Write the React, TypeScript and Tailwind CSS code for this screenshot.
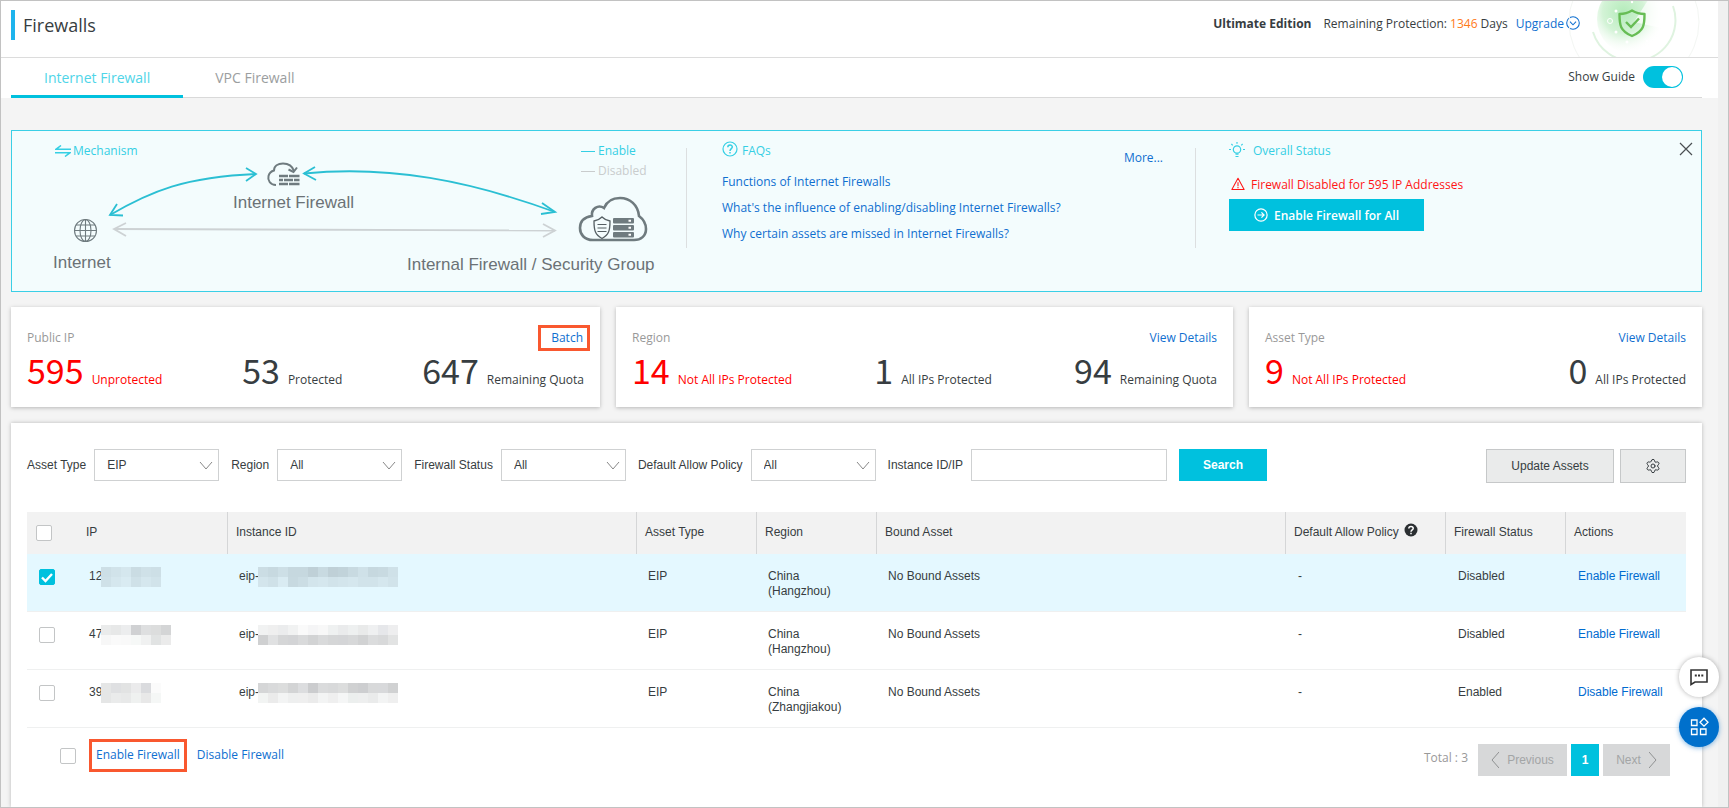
import React, { useState } from 'react';
import { Settings } from 'lucide-react';

type Stat = { value: string; label: string; alert?: boolean };

type AssetRow = {
  ip: string;
  ipMask: string[][];
  instance: string;
  instanceMask: string[][];
  region: string;
  status: string;
  action: string;
};

const uiFont = 'font-["Open_Sans",sans-serif]';

const faqs = [
  'Functions of Internet Firewalls',
  "What's the influence of enabling/disabling Internet Firewalls?",
  'Why certain assets are missed in Internet Firewalls?',
];

const cards: { title: string; link: string; marked?: boolean; stats: Stat[] }[] = [
  {
    title: 'Public IP',
    link: 'Batch',
    marked: true,
    stats: [
      { value: '595', label: 'Unprotected', alert: true },
      { value: '53', label: 'Protected' },
      { value: '647', label: 'Remaining Quota' },
    ],
  },
  {
    title: 'Region',
    link: 'View Details',
    stats: [
      { value: '14', label: 'Not All IPs Protected', alert: true },
      { value: '1', label: 'All IPs Protected' },
      { value: '94', label: 'Remaining Quota' },
    ],
  },
  {
    title: 'Asset Type',
    link: 'View Details',
    stats: [
      { value: '9', label: 'Not All IPs Protected', alert: true },
      { value: '0', label: 'All IPs Protected' },
    ],
  },
];

const filters = [
  { id: 'asset-type', label: 'Asset Type', value: 'EIP' },
  { id: 'region', label: 'Region', value: 'All' },
  { id: 'status', label: 'Firewall Status', value: 'All' },
  { id: 'policy', label: 'Default Allow Policy', value: 'All' },
];

const rows: AssetRow[] = [
  {
    ip: '12',
    ipMask: [
      ['#cddfe6', '#d1e3ea', '#d5e7ee', '#cadce3', '#cfe1e8', '#cddfe6'],
      ['#cfe1e8', '#d5e7ee', '#d9ebf2', '#cfe1e8', '#d5e7ee', '#d1e3ea'],
    ],
    instance: 'eip-',
    instanceMask: [
      ['#cbdde4', '#c7d9e0', '#cddfe6', '#c6d8df', '#c6d8df', '#bfd0d7', '#c8dae1', '#bfd0d7', '#c1d3da', '#c8dae1', '#cfe1e8', '#c6d8df', '#c8dae1', '#cfe1e8'],
      ['#d3e5ec', '#cfe1e8', '#d9ebf2', '#c7d9e0', '#cbdde4', '#d3e5ec', '#d5e7ee', '#d1e3ea', '#d3e5ec', '#d5e7ee', '#d1e3ea', '#d1e3ea', '#d5e7ee', '#d1e3ea'],
    ],
    region: '(Hangzhou)',
    status: 'Disabled',
    action: 'Enable Firewall',
  },
  {
    ip: '47',
    ipMask: [
      ['#eaebeb', '#e7e8e8', '#ecedee', '#d0d1d3', '#dedfe0', '#dcdddd', '#d4d5d6'],
      ['#f7f7f7', '#fafafa', '#f9f9f9', '#f6f8f7', '#f0f1f1', '#e1e3e3', '#ebebeb'],
    ],
    instance: 'eip-',
    instanceMask: [
      ['#f1f2f2', '#efefef', '#ebeced', '#f1f2f2', '#fafafa', '#f5f5f6', '#f8f8f8', '#eff1f1', '#eaebec', '#eef0f0', '#e9eaea', '#eff0f1', '#e6e7ea', '#eeeeef'],
      ['#cfd0d1', '#e0e1e2', '#d5d6d7', '#d3d4d6', '#d9dadb', '#d2d3d4', '#d9dadb', '#d5d6d7', '#d4d5d7', '#d7d8d9', '#d1d2d3', '#dbdcdd', '#d8d9da', '#e2e3e3'],
    ],
    region: '(Hangzhou)',
    status: 'Disabled',
    action: 'Enable Firewall',
  },
  {
    ip: '39',
    ipMask: [
      ['#e5e6e6', '#dfe0e2', '#e2e3e3', '#ebebec', '#dadbde', '#fbfbfb'],
      ['#e5e6e6', '#eaebeb', '#e8e9e9', '#eff1f0', '#e8e8e8', '#f5f7f6'],
    ],
    instance: 'eip-',
    instanceMask: [
      ['#d5d6d7', '#d9dadb', '#dcdddd', '#d3d4d5', '#dcdddf', '#cbccce', '#dadbdc', '#d8d9da', '#dcdddd', '#d0d1d2', '#cdced0', '#d8d9da', '#d8d9db', '#d0d1d2'],
      ['#f2f4f3', '#ebebeb', '#f3f4f4', '#eeefef', '#efefef', '#ebebeb', '#f3f4f4', '#efefef', '#f5f6f6', '#ecefee', '#eeefef', '#eaebeb', '#f3f4f4', '#efefef'],
    ],
    region: '(Zhangjiakou)',
    status: 'Enabled',
    action: 'Disable Firewall',
  },
];

const Mosaic: React.FC<{ cells: string[][] }> = ({ cells }) => (
  <span className="-ml-px flex flex-col">
    {cells.map((line, i) => (
      <span key={i} className="flex">
        {line.map((color, j) => (
          <span key={j} className="h-[10px] w-[10px]" style={{ backgroundColor: color }} />
        ))}
      </span>
    ))}
  </span>
);

const CheckBox: React.FC<{ label: string; defaultChecked?: boolean }> = ({ label, defaultChecked }) => (
  <span className="relative block h-4 w-4">
    <input
      type="checkbox"
      aria-label={label}
      defaultChecked={defaultChecked}
      className="peer block h-4 w-4 appearance-none rounded-xs border border-[#c3c5c6] bg-white checked:border-[#00c1de] checked:bg-[#00c1de]"
    />
    <svg viewBox="0 0 16 16" className="pointer-events-none absolute inset-0 hidden h-4 w-4 peer-checked:block">
      <path d="M3 8.5 6.5 12 13 5" fill="none" stroke="#fff" strokeWidth="2.4" />
    </svg>
  </span>
);

const HeaderShield: React.FC = () => (
  <svg viewBox="0 0 136 56" className="pointer-events-none absolute top-0 right-4 h-14 w-[136px]" aria-hidden="true">
    <defs>
      <radialGradient id="glow" cx="0.38" cy="0.4" r="0.6">
        <stop offset="0" stopColor="#b4ebba" />
        <stop offset="0.5" stopColor="#d3f3d6" />
        <stop offset="1" stopColor="#ffffff" stopOpacity="0" />
      </radialGradient>
    </defs>
    <circle cx="68" cy="21" r="65" fill="none" stroke="#f3f6f3" />
    <circle cx="66" cy="18" r="35" fill="url(#glow)" />
    <path d="M68 21 84 -4 110 0 108 30Z" fill="#ffffff" opacity="0.7" />
    <path d="M27 31A41 41 0 0 0 68 60A41 41 0 0 0 107 5" fill="none" stroke="#dff3e0" strokeWidth="2" />
    <g fill="#fff">
      <circle cx="50" cy="10" r="1.5" />
      <circle cx="50" cy="31" r="1.5" />
      <circle cx="61" cy="41" r="1.5" />
      <circle cx="66" cy="1" r="1.2" />
      <circle cx="81" cy="40" r="1.2" />
    </g>
    <circle cx="44" cy="20" r="2.5" fill="none" stroke="#fff" />
    <path d="M66 9.5C70 12 74 13 78.500 13C78.500 24 78 30 66 35C54 30 53.500 24 53.500 13C58 13 62 12 66 9.500Z" fill="none" stroke="#67bd55" strokeWidth="2.4" strokeLinejoin="round" />
    <path d="M60 21 65 26 73 17.500" fill="none" stroke="#67bd55" strokeWidth="2.4" />
  </svg>
);

const MechanismDiagram: React.FC = () => (
  <svg viewBox="40 131 640 160" className="h-40 w-[640px]" role="img" aria-label="Traffic between Internet and assets">
    <g fill="none" stroke="#2bbfd3" strokeWidth="1.800">
      <path d="M110 215C151 191 185 177 256 174" />
      <path d="M246 168 256 174 246 181M117 204 110 215 123 215.500" />
      <path d="M304 173.500C390 165 470 181 555 212" />
      <path d="M315 167 304 173.500 316 180M542 203 555 212 541 214" />
    </g>
    <g fill="none" stroke="#cdd2d4" strokeWidth="1.800">
      <path d="M114 229 555 230.500" />
      <path d="M126 223 114 229 126 236M543 224 555 230.500 543 237" />
    </g>
    {/* globe */}
    <g fill="none" stroke="#6f7b7f" strokeWidth="1.100">
      <circle cx="85.500" cy="230.500" r="11" />
      <ellipse cx="85.500" cy="230.500" rx="5.500" ry="11" />
      <path d="M85.500 219.500V241.500M74.500 230.500H96.500M76 225H95M76 236H95" />
    </g>
    {/* cloud in front of a brick wall */}
    <g fill="none" stroke="#6f7b7f" strokeWidth="2">
      <path d="M276 185C270 185 267.500 180 268.500 176C269.500 172 272 171 274 170.500C274 166 278 163.500 283 163.500C288.500 163.500 292.500 166.500 294 171" />
      <path d="M288.500 169.500 293.500 172 297 167.500" />
    </g>
    <g stroke="#6f7b7f" strokeWidth="2.400">
      <path d="M279 176H288M289 176H299.500M279 180H283M284 180H293M294 180H299.500M279 184H288M289 184H299.500" />
    </g>
    {/* cloud with shield and servers */}
    <path
      d="M593 240C584 240 580 234 580 228C580 221 585 217 592 216C591 209 598 204 604 208C607 201 613 198 620 198C630 198 638 205 639 216C643 219 646 223 646 229C646 236 641 240 634 240Z"
      fill="none"
      stroke="#6f7b7f"
      strokeWidth="2.600"
    />
    <path d="M602 217C605 220 607 220.500 610 221C610 230 609 235 602 238.500C595 235 594 230 594 221C597 220.500 599 220 602 217Z" fill="none" stroke="#555f63" strokeWidth="1.300" />
    <path d="M597.500 224.500H606.500M597.500 228H606.500M597.500 231.500H606.500" stroke="#555f63" strokeWidth="1.200" />
    <g fill="#6f7b7f">
      <rect x="613" y="218" width="21" height="5.500" rx="1" />
      <rect x="613" y="225" width="21" height="5.500" rx="1" />
      <rect x="613" y="232" width="21" height="5.500" rx="1" />
    </g>
    <path d="M628.500 220.800H631M628.500 227.800H631M628.500 234.800H631" stroke="#fff" strokeWidth="2" />
    <g fill="#6b7276" fontFamily="Liberation Sans, sans-serif" fontSize="17">
      <text x="53" y="268">Internet</text>
      <text x="233" y="208">Internet Firewall</text>
      <text x="407" y="270">Internal Firewall / Security Group</text>
    </g>
  </svg>
);

const GuidePanel: React.FC<{ onClose: () => void }> = ({ onClose }) => (
  <section className={`${uiFont} relative flex h-[162px] border border-[#3acfe6] bg-[#f3fcfd] leading-5`}>
    <div className="relative w-[674px] shrink-0 pl-7">
      <MechanismDiagram />
      <h2 className="absolute top-2.5 left-[43px] flex items-center gap-0.5 text-[#35cfe4]">
        <svg viewBox="0 0 16 12" className="h-3 w-4" fill="none" stroke="currentColor" strokeWidth="1.500">
          <path d="M16 4.300H1L6 .5M0 7.700H15L10 11.500" />
        </svg>
        Mechanism
      </h2>
      <ul className="absolute top-2.5 left-[569px]">
        <li className="flex items-center gap-[3px] text-[#35cfe4]">
          <span className="h-px w-3.5 bg-current" />
          Enable
        </li>
        <li className="flex items-center gap-[3px] text-[#c9cccd]">
          <span className="h-px w-3.5 bg-current" />
          Disabled
        </li>
      </ul>
    </div>

    <div className="my-[17px] flex h-[100px] w-[510px] shrink-0 border-x border-[#dcdfe0] pr-8 pl-[35px]">
      <div className="-mt-[7px] flex-1">
        <h2 className="flex items-center gap-1 text-[#35cfe4]">
          <svg viewBox="0 0 16 16" className="mb-1 h-4 w-4" fill="none" stroke="currentColor" strokeWidth="1.200">
            <circle cx="8" cy="8" r="7" />
            <path d="M5.800 6.300C5.800 3.200 10.300 3.300 10.300 6C10.300 7.600 8 7.800 8 10M8 11V12.500" strokeWidth="1.500" />
          </svg>
          FAQs
        </h2>
        <ul className="mt-[11px] space-y-1.5">
          {faqs.map((faq) => (
            <li key={faq} className="whitespace-nowrap">
              <a href="#faq" className="text-[#0f6fd0]">{faq}</a>
            </li>
          ))}
        </ul>
      </div>
      <a href="#more" className="text-[#0f6fd0]">More...</a>
    </div>

    <div className="flex-1 pt-2.5 pl-[33px]">
      <h2 className="flex items-center gap-2 text-[#35cfe4]">
        <svg viewBox="0 0 16 16" className="mb-0.5 h-4 w-4" fill="none" stroke="currentColor" strokeWidth="1.200">
          <circle cx="8" cy="7.500" r="3.700" />
          <path d="M6.500 12.200H9.500M6.500 14.500H9.500M8 0V1.800M0 7.500H2M14 7.500H16M2.400 2 3.700 3.300M13.600 2 12.300 3.300" />
        </svg>
        Overall Status
      </h2>
      <p className="mt-3.5 flex items-center gap-1.5 text-[#ff1515]">
        <svg viewBox="0 0 16 16" className="mb-0.5 ml-0.5 h-3.5 w-3.5" fill="none" stroke="currentColor" strokeWidth="1.200">
          <path d="M8 1.500 15 14.200H1ZM8 6V10.500M8 11.500V12.800" strokeLinejoin="round" />
        </svg>
        Firewall Disabled for 595 IP Addresses
      </p>
      <button type="button" className="mt-1 flex h-8 w-[195px] items-center justify-center gap-1.5 bg-[#00c1de] pt-0.5 font-semibold text-white">
        <svg viewBox="0 0 16 16" className="mb-0.5 h-3.5 w-3.5" fill="none" stroke="currentColor" strokeWidth="1.400">
          <circle cx="8" cy="8" r="7" />
          <path d="M4 8H11.500M8.500 5 11.500 8 8.500 11" />
        </svg>
        Enable Firewall for All
      </button>
    </div>

    <button type="button" aria-label="Close" onClick={onClose} className="absolute top-[11px] right-2 h-3.5 w-3.5">
      <svg viewBox="0 0 14 14" className="h-3.5 w-3.5" stroke="#4a4f52" strokeWidth="1.200">
        <path d="M1 1 13 13M13 1 1 13" />
      </svg>
    </button>
  </section>
);

const App: React.FC = () => {
  const [showGuide, setShowGuide] = useState(true);

  return (
    <div className="flex h-screen overflow-hidden border border-[#c2c2c2] bg-[#f4f4f4] font-['Liberation_Sans',sans-serif] text-xs text-[#373d41]">
      <main className="flex min-w-0 flex-1 flex-col">
        {/* Header */}
        <header className={`${uiFont} relative flex h-[57px] shrink-0 items-start border-b border-[#dcdcdc] bg-white pl-2.5`}>
          <h1 className="mt-[9px] border-l-4 border-[#1eb4ed] pl-2 text-lg leading-[30px]">Firewalls</h1>
          <p className="mt-[13px] mr-[138px] ml-auto flex items-center leading-5">
            <b className="mr-3">Ultimate Edition</b>
            <span>
              Remaining Protection: <span className="text-[#ff7a1a]">1346</span> Days
            </span>
            <a href="#upgrade" className="ml-2 flex items-center gap-0.5 text-[#0f6fd0]">
              Upgrade
              <svg viewBox="0 0 16 16" className="mb-0.5 h-3.5 w-3.5" fill="none" stroke="currentColor" strokeWidth="1.200">
                <circle cx="8" cy="8" r="7.200" />
                <path d="M4.500 6.500 8 10 11.500 6.500" />
              </svg>
            </a>
          </p>
          <HeaderShield />
        </header>

        {/* Tabs */}
        <div className={`${uiFont} shrink-0 bg-white pr-4 pl-2.5`}>
          <div className="flex h-10 items-stretch border-b border-[#d9d9d9]">
            <nav className="flex text-sm leading-10">
              <a href="#internet" className="-mb-px border-b-3 border-[#00c1de] px-[33px] text-[#4fd5e8]">Internet Firewall</a>
              <a href="#vpc" className="px-8 text-[#9b9ea0]">VPC Firewall</a>
            </nav>
            <label className="mr-[19px] ml-auto flex items-center gap-2 pb-px">
              Show Guide
              <input type="checkbox" className="peer sr-only" checked={showGuide} onChange={(e) => setShowGuide(e.target.checked)} />
              <span className="flex h-[22px] w-10 rounded-full bg-[#c3c5c6] p-px peer-checked:justify-end peer-checked:bg-[#00c1de]">
                <span className="h-5 w-5 rounded-full bg-white" />
              </span>
            </label>
          </div>
        </div>

        <div className="flex flex-1 flex-col pt-8 pr-4 pl-2.5">
          {showGuide && <GuidePanel onClose={() => setShowGuide(false)} />}

          {/* Summary cards */}
          <div className={`${uiFont} mt-[15px] grid grid-cols-[589fr_617fr_453fr] gap-4 leading-5`}>
            {cards.map((card) => (
              <section key={card.title} className="h-[100px] bg-white px-4 pt-[21px] shadow-[0_1px_4px_rgba(0,0,0,0.25)]">
                <div className="flex h-5 items-center justify-between">
                  <h2 className="text-[#999]">{card.title}</h2>
                  {card.marked ? (
                    <a href="#batch" className="-mr-1.5 border-3 border-[#f9582f] pr-1 pl-2.5 text-[#0f6fd0]">{card.link}</a>
                  ) : (
                    <a href="#details" className="text-[#0f6fd0]">{card.link}</a>
                  )}
                </div>
                <div className="flex items-baseline justify-between">
                  {card.stats.map((stat) => (
                    <p key={stat.label} className={stat.alert ? 'text-[#ff0000]' : ''}>
                      <span className="mr-2 font-['Noto_Sans_CJK_SC',sans-serif] text-[34px] leading-[44px]">{stat.value}</span>
                      {stat.label}
                    </p>
                  ))}
                </div>
              </section>
            ))}
          </div>

          <section className="mt-4 flex-1 bg-white px-4 pt-[26px] shadow-[0_0_4px_rgba(0,0,0,0.25)]">
            {/* Filters */}
            <form className="flex items-start" onSubmit={(e) => e.preventDefault()}>
              {filters.map((filter) => (
                <div key={filter.id} className="mr-3 flex items-center gap-2">
                  <label htmlFor={filter.id} className="whitespace-nowrap">{filter.label}</label>
                  <div className="relative">
                    <select id={filter.id} className="h-8 w-[125px] appearance-none border border-[#cfd1d2] bg-white pl-3">
                      <option>{filter.value}</option>
                    </select>
                    <svg viewBox="0 0 14 10" className="pointer-events-none absolute top-3 right-1.5 h-2.5 w-3.5" fill="none" stroke="#888">
                      <path d="M1 1 7 8 13 1" />
                    </svg>
                  </div>
                </div>
              ))}
              <label htmlFor="instance" className="mr-2 leading-8">Instance ID/IP</label>
              <input id="instance" type="text" className="h-8 w-[196px] border border-[#cfd1d2] bg-white px-2" />
              <button type="submit" className="ml-3 h-8 w-[88px] bg-[#00c1de] font-bold text-white">Search</button>
              <button type="button" className="ml-auto h-[34px] w-32 border border-[#c6c8c9] bg-[#eaebeb]">Update Assets</button>
              <button type="button" aria-label="Settings" className="ml-1.5 flex h-[34px] w-[66px] items-center justify-center border border-[#c6c8c9] bg-[#eaebeb]">
                <Settings size={16} strokeWidth={1.5} />
              </button>
            </form>

            {/* Asset table */}
            <table className="mt-[29px] w-full table-fixed border-separate border-spacing-0 text-left">
              <colgroup>
                <col className="w-[51px]" />
                <col className="w-[150px]" />
                <col />
                <col className="w-[120px]" />
                <col className="w-[120px]" />
                <col />
                <col className="w-[160px]" />
                <col className="w-[120px]" />
                <col className="w-[120px]" />
              </colgroup>
              <thead className="bg-[#f2f2f2]">
                <tr className="h-[42px] [&>th]:border-r [&>th]:border-[#d5d6d7] [&>th]:px-2 [&>th]:pb-0.5 [&>th]:font-normal">
                  <th className="border-none! pb-0! pl-[9px]!"><CheckBox label="Select all" /></th>
                  <th>IP</th>
                  <th>Instance ID</th>
                  <th>Asset Type</th>
                  <th>Region</th>
                  <th>Bound Asset</th>
                  <th>
                    <span className="flex items-center gap-[5px] whitespace-nowrap">
                      Default Allow Policy
                      <svg viewBox="0 0 14 14" className="mb-1 h-3.5 w-3.5">
                        <circle cx="7" cy="7" r="6.500" fill="#2b2f32" />
                        <path d="M4.800 5.600C4.800 2.600 9.200 2.800 9.200 5.400C9.200 6.900 7 6.900 7 8.700M7 9.700V11.300" fill="none" stroke="#fff" strokeWidth="1.500" />
                      </svg>
                    </span>
                  </th>
                  <th>Firewall Status</th>
                  <th className="border-none!">Actions</th>
                </tr>
              </thead>
              <tbody>
                {rows.map((row, i) => (
                  <tr
                    key={row.ip}
                    className="h-[58px] align-top leading-[15px] has-checked:bg-[#e4f8ff] [&>td]:border-b [&>td]:border-[#eff0f0] [&>td]:px-[11px] [&>td]:pt-[15px]"
                  >
                    <td className="pl-3!"><CheckBox label={`Select ${row.ip}`} defaultChecked={i === 0} /></td>
                    <td>
                      <div className="flex h-[15px] items-center">{row.ip}<Mosaic cells={row.ipMask} /></div>
                    </td>
                    <td>
                      <div className="flex h-[15px] items-center">{row.instance}<Mosaic cells={row.instanceMask} /></div>
                    </td>
                    <td>EIP</td>
                    <td>China<br />{row.region}</td>
                    <td>No Bound Assets</td>
                    <td className="pl-3!">-</td>
                    <td className="pl-3!">{row.status}</td>
                    <td className="pl-3! whitespace-nowrap"><a href="#toggle" className="text-[#006bd0]">{row.action}</a></td>
                  </tr>
                ))}
              </tbody>
            </table>

            {/* Batch actions and pagination */}
            <div className={`${uiFont} flex items-start pt-[11px] pr-4 pl-[33px]`}>
              <div className="mt-[9px] mr-[13px]"><CheckBox label="Select page" /></div>
              <button type="button" className="h-[33px] border-3 border-[#f9582f] px-1 pb-0.5 leading-5 text-[#0f6fd0]">Enable Firewall</button>
              <button type="button" className="ml-2.5 h-[33px] pb-0.5 leading-5 text-[#0f6fd0]">Disable Firewall</button>
              <span className="mt-[9px] mr-2.5 ml-auto leading-5 text-[#999]">Total : 3</span>
              <div className="mt-[5px] flex h-8 gap-1 font-['Liberation_Sans',sans-serif] text-[#a3a5a6]">
                <button type="button" disabled className="flex w-[89px] items-center justify-center gap-2 bg-[#d7d8d9]">
                  <svg viewBox="0 0 8 16" className="h-4 w-2" fill="none" stroke="#8f9192"><path d="M8 0 1 8 8 16" /></svg>
                  Previous
                </button>
                <button type="button" className="w-7 bg-[#00c1de] font-bold text-white">1</button>
                <button type="button" disabled className="flex w-[67px] items-center justify-center gap-2 bg-[#d7d8d9]">
                  Next
                  <svg viewBox="0 0 8 16" className="h-4 w-2" fill="none" stroke="#8f9192"><path d="M0 0 7 8 0 16" /></svg>
                </button>
              </div>
            </div>
          </section>
        </div>
      </main>
      <div className="w-2.5 shrink-0 bg-[#f0f0f0]" />

      {/* Floating help buttons */}
      <div className="fixed right-2.5 bottom-[61px] flex flex-col gap-2.5">
        <button type="button" aria-label="Feedback" className="flex h-10 w-10 items-center justify-center rounded-full bg-white shadow-[0_0_5px_rgba(0,0,0,0.3)]">
          <svg viewBox="0 0 20 20" className="h-5 w-5" fill="none" stroke="#333" strokeWidth="1.600">
            <path d="M2 17.500V3H18V15H6Z" />
            <path d="M5.800 8.500H7.800M9 8.500H11M12.300 8.500H14.300" strokeWidth="2" />
          </svg>
        </button>
        <button type="button" aria-label="Products" className="flex h-10 w-10 items-center justify-center rounded-full bg-[#0070cc] shadow-[0_1px_5px_rgba(0,112,204,0.5)]">
          <svg viewBox="0 0 20 20" className="h-5 w-5" fill="none" stroke="#fff" strokeWidth="1.300">
            <path d="M2.500 3H8V8.500H2.500ZM2.500 12H8V17.500H2.500ZM11.500 12H17V17.500H11.500ZM15 1.200 19 5.200 15 9.200 11 5.200Z" />
          </svg>
        </button>
      </div>
    </div>
  );
};

export default App;
